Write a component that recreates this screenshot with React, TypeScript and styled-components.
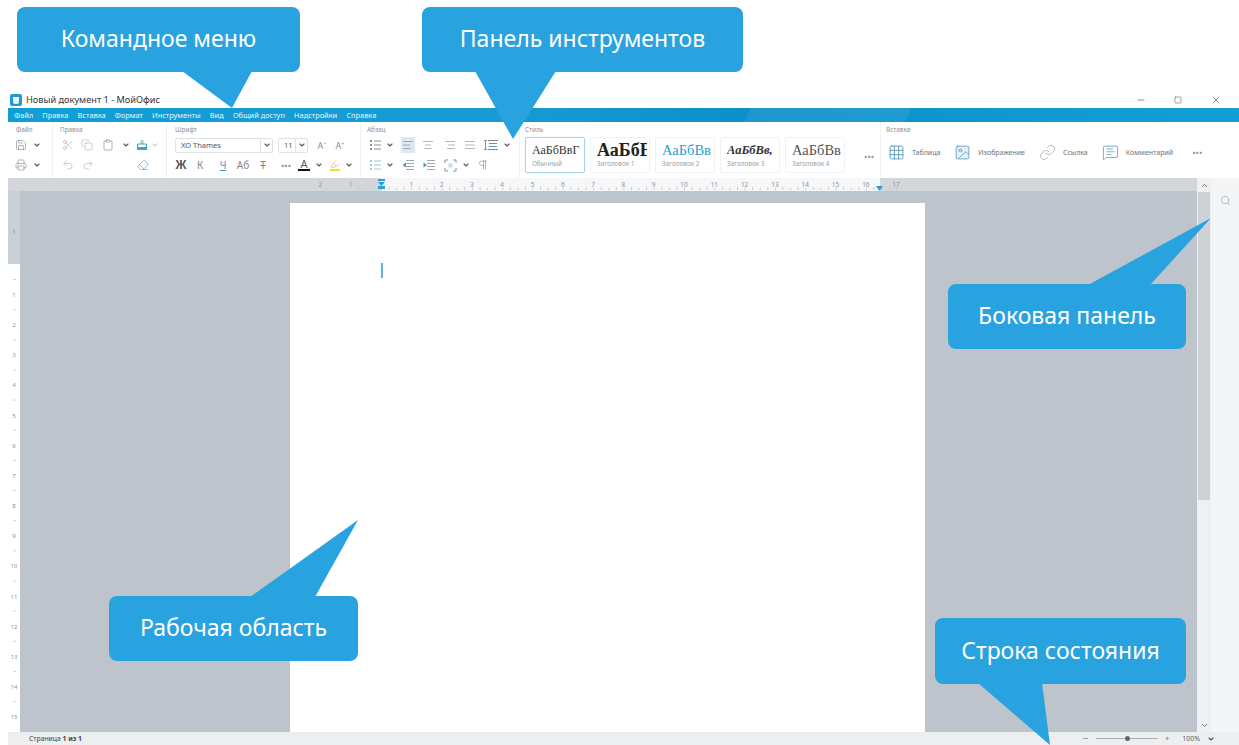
import React from 'react';
import styled, { createGlobalStyle } from 'styled-components';
import {
  Save, Printer, Scissors, Copy, Clipboard, Undo2, Redo2, Eraser, ChevronDown, ChevronUp,
  AlignLeft, AlignCenter, AlignRight, AlignJustify, Pilcrow,
  Highlighter, Minus, Square, X, Search, Link, MessageSquareText, Image as ImageIcon, Grid3x3,
} from 'lucide-react';

const Global = createGlobalStyle`
  html, body { margin: 0; padding: 0; background: #fff; }
  body { font-family: "Noto Sans", "Liberation Sans", sans-serif; overflow: hidden; }
`;

const Page = styled.div`
  position: relative;
  width: 1239px;
  height: 745px;
  overflow: hidden;
  padding: 91px 0 0 8px;
  box-sizing: border-box;
  display: flex;
  flex-direction: column;
`;

/* Window chrome */
const TitleBar = styled.div`
  height: 17px;
  display: flex;
  align-items: center;
  padding-left: 2px;
  gap: 4px;
  font-size: 9.2px;
  color: #333;
`;
const TitleText = styled.span`
  flex: 1;
`;
const WinButtons = styled.div`
  display: flex;
  align-items: center;
  color: #555;
  padding-right: 17px;
  gap: 28px;
`;
const MenuBar = styled.div`
  height: 14px;
  background:
    linear-gradient(115deg, transparent 60%, rgba(255,255,255,.07) 60%, rgba(255,255,255,.07) 73%, transparent 73%),
    linear-gradient(100deg, #0f9fd6 0%, #1a9ad2 40%, #0d8fc9 60%, #12a0d4 100%);
  display: flex;
  align-items: center;
  padding-left: 6px;
  gap: 9.2px;
  font-size: 7.4px;
  color: #e6f6fc;
`;

/* Ribbon */
const Ribbon = styled.div`
  height: 56px;
  display: flex;
  background: #fff;
`;
const Group = styled.div<{ $w: number; $pl: number; $last?: boolean }>`
  width: ${(p) => p.$w}px;
  padding-left: ${(p) => p.$pl}px;
  box-sizing: border-box;
  flex: none;
  display: flex;
  flex-direction: column;
  border-right: ${(p) => (p.$last ? 'none' : '1px solid #eff1f3')};
`;
const GroupLabel = styled.div<{ $ml?: number }>`
  height: 13px;
  font-size: 6.4px;
  line-height: 15px;
  color: #8a9097;
  margin-left: ${(p) => p.$ml ?? 0}px;
`;
const ToolRow = styled.div`
  height: 20px;
  display: flex;
  align-items: center;
`;
const Slot = styled.div<{ $w: number; $m?: number; $on?: boolean; $c?: string }>`
  width: ${(p) => p.$w}px;
  margin-left: ${(p) => p.$m ?? 0}px;
  height: 16px;
  flex: none;
  display: flex;
  align-items: center;
  justify-content: center;
  background: ${(p) => (p.$on ? '#dfe8ef' : 'transparent')};
  color: ${(p) => p.$c ?? '#7f868d'};
  font-size: 11px;
`;
const FieldBox = styled.div<{ $w: number; $m?: number }>`
  width: ${(p) => p.$w}px;
  margin-left: ${(p) => p.$m ?? 0}px;
  height: 15px;
  flex: none;
  box-sizing: border-box;
  border: 1px solid #dfe2e5;
  border-radius: 2px;
  display: flex;
  align-items: center;
  justify-content: space-between;
  padding-left: 5px;
  font-size: 7.5px;
  color: #555;
`;
const FieldArrow = styled.span`
  width: 11px;
  height: 13px;
  border-left: 1px solid #dfe2e5;
  display: flex;
  align-items: center;
  justify-content: center;
  color: #666;
`;
const Bold = styled.b`
  font-family: "Liberation Sans", sans-serif;
  font-size: 12px;
  color: #555;
`;
const Plain = styled.span<{ $deco?: string }>`
  font-size: 10px;
  color: inherit;
  text-decoration: ${(p) => p.$deco ?? 'none'};
`;
const Sup = styled.span`
  font-size: 9px;
  color: #8a9097;
`;
const Dots = styled.span`
  font-size: 9px;
  color: #8a9097;
  line-height: 1;
`;
const ColorA = styled.span<{ $bar: string }>`
  font-size: 11px;
  line-height: 10px;
  color: #555;
  border-bottom: 2px solid ${(p) => p.$bar};
  padding: 0 2px;
`;
const PenMark = styled.span`
  display: flex;
  color: #c9a63c;
  border-bottom: 2px solid #f5dc2e;
`;

const Gallery = styled.div`
  display: flex;
  align-items: flex-start;
  gap: 5px;
  margin-top: 2px;
`;
const StyleCard = styled.div<{ $on?: boolean }>`
  width: 60px;
  height: 36px;
  box-sizing: border-box;
  flex: none;
  border: 1px solid ${(p) => (p.$on ? '#a6d3ea' : '#f0f1f3')};
  border-radius: 2px;
  padding: 0 0 0 6px;
  overflow: hidden;
  display: flex;
  flex-direction: column;
  justify-content: center;
  ${(p) => (p.$on ? 'box-shadow: 0 0 1px #a6d3ea;' : '')}
`;
const Sample = styled.div<{ $size: number; $c: string; $b?: boolean; $i?: boolean }>`
  font-family: "Liberation Serif", serif;
  font-size: ${(p) => p.$size}px;
  line-height: 18px;
  height: 17px;
  color: ${(p) => p.$c};
  font-weight: ${(p) => (p.$b ? 700 : 400)};
  font-style: ${(p) => (p.$i ? 'italic' : 'normal')};
  white-space: nowrap;
  overflow: hidden;
  width: 50px;
`;
const SampleName = styled.div`
  font-size: 6.4px;
  line-height: 11px;
  color: #9aa0a6;
  white-space: nowrap;
`;
const GalleryMore = styled.div`
  margin: 13px 0 0 14px;
  color: #8a9097;
  font-size: 9px;
`;
const InsertRow = styled.div`
  display: flex;
  align-items: center;
  height: 30px;
  margin-top: 2px;
`;
const InsertItem = styled.div<{ $m: number }>`
  display: flex;
  align-items: center;
  gap: 7px;
  margin-left: ${(p) => p.$m}px;
  font-size: 7px;
  color: #6d7379;
  white-space: nowrap;
`;
const InsertIcon = styled.span<{ $c?: string }>`
  display: flex;
  color: ${(p) => p.$c ?? '#4588ad'};
`;

/* Work area */
const RulerBar = styled.div`
  height: 13px;
  display: flex;
  margin-right: 42px;
  background: #d3d7db;
`;
const Main = styled.div`
  flex: 1;
  min-height: 0;
  display: flex;
`;
const VRuler = styled.div`
  width: 12px;
  flex: none;
  background: #fff;
`;
const Workspace = styled.div`
  flex: 1;
  background: #bec4cb;
  padding: 12px 0 0 270px;
  overflow: hidden;
`;
const Sheet = styled.div`
  width: 635px;
  height: 560px;
  background: #fff;
  padding: 60px 0 0 91px;
  box-sizing: border-box;
`;
const Caret = styled.div`
  width: 2px;
  height: 15px;
  background: #5db6e2;
`;
const Scrollbar = styled.div`
  width: 14px;
  flex: none;
  background: #eef0f2;
  display: flex;
  flex-direction: column;
  align-items: center;
  color: #5d6369;
`;
const ScrollThumb = styled.div`
  width: 12px;
  height: 308px;
  background: #ced2d7;
  margin-bottom: auto;
`;
const ScrollEnd = styled.div`
  height: 14px;
  display: flex;
  align-items: center;
`;
const SidePanel = styled.div`
  flex: 1;
  background: #f4f5f6;
  display: flex;
  justify-content: center;
  padding-top: 17px;
  color: #8a9097;
`;
const RightColumn = styled.div`
  display: flex;
  margin-top: -13px;
  flex: none;
  width: 42px;
`;
const StatusBar = styled.div`
  height: 13px;
  background: #eceef0;
  display: flex;
  align-items: center;
  font-size: 6.8px;
  color: #444;
  padding: 0 24px 0 21px;
`;
const StatusText = styled.span`
  flex: 1;
`;
const Zoomer = styled.div`
  display: flex;
  align-items: center;
  gap: 7px;
  color: #666;
`;
const ZoomTrack = styled.div`
  position: relative;
  width: 62px;
  height: 1px;
  background: #aab0b5;
`;
const ZoomKnob = styled.div`
  position: absolute;
  left: 29px;
  top: -2px;
  width: 5px;
  height: 5px;
  border-radius: 50%;
  background: #666;
`;
const ZoomValue = styled.span`
  margin-left: 6px;
  font-size: 7px;
`;

/* Callouts over the window */
const Tail = styled.svg`
  position: absolute;
  left: 0;
  top: 0;
  width: 1239px;
  height: 745px;
  pointer-events: none;
`;
const Callout = styled.div<{ $x: number; $y: number; $w: number; $h: number }>`
  position: absolute;
  left: ${(p) => p.$x}px;
  top: ${(p) => p.$y}px;
  width: ${(p) => p.$w}px;
  height: ${(p) => p.$h}px;
  padding-bottom: 3px;
  box-sizing: border-box;
  background: #29a3e0;
  border-radius: 8px;
  color: #fff;
  font-size: 23px;
  display: flex;
  align-items: center;
  justify-content: center;
  white-space: nowrap;
`;

const Chev = () => <ChevronDown size={8} strokeWidth={3.4} color="#555" />;
const I = { size: 12, strokeWidth: 1.2 };

// Stamp shaped "copy formatting" tool
const StampIcon = () => (
  <svg width="12" height="13" viewBox="0 0 12 13">
    <path d="M4.500 1h3v4h-3z" fill="#a9c9dc" />
    <rect x="1.500" y="5" width="9" height="5.500" rx="1" fill="none" stroke="#4a9dc8" strokeWidth="1.200" />
    <rect x="1" y="8" width="10" height="3" fill="#4a9dc8" />
  </svg>
);

// Bulleted list: three dots with a line each
const BulletsIcon = ({ c }: { c: string }) => (
  <svg width="13" height="12" viewBox="0 0 13 12">
    {[2, 6, 10].map((y) => (
      <g key={y}>
        <rect x="1" y={y - 1} width="2" height="2" fill={c} />
        <rect x="5" y={y - 0.5} width="7" height="1" fill={c} />
      </g>
    ))}
  </svg>
);

// Indent arrows next to a paragraph block
const IndentIcon = ({ flip }: { flip?: boolean }) => (
  <svg width="13" height="12" viewBox="0 0 13 12">
    {[1, 4, 7, 10].map((y) => (
      <rect key={y} x="4" y={y} width="8" height="1" fill="#a3a8ad" />
    ))}
    <path d={flip ? 'M0.500 3.500 4 6 0.500 8.500z' : 'M4 3.500 0.500 6 4 8.500z'} fill="#3f9cc9" />
  </svg>
);

// Line spacing: framed lines with a bracket at the left
const SpacingIcon = () => (
  <svg width="15" height="12" viewBox="0 0 15 12">
    <rect x="0" y="1" width="3" height="1" fill="#8a9097" />
    <rect x="1" y="1" width="1" height="10" fill="#8a9097" />
    <rect x="0" y="10" width="3" height="1" fill="#8a9097" />
    <rect x="4" y="1" width="10" height="1" fill="#7f868d" />
    <rect x="4" y="10" width="10" height="1" fill="#7f868d" />
    <rect x="5" y="4" width="8" height="1" fill="#3f9cc9" />
    <rect x="5" y="7" width="8" height="1" fill="#3f9cc9" />
  </svg>
);

// Four corners round a dotted centre
const ColumnsIcon = () => (
  <svg width="13" height="13" viewBox="0 0 13 13" fill="none" stroke="#8a9097" strokeWidth="1">
    <path d="M1 4V1h3M9 1h3v3M12 9v3H9M4 12H1V9" />
    <rect x="4.500" y="4.500" width="4" height="4" fill="#bfe0ef" stroke="none" />
  </svg>
);

const HRuler = () => {
  const unit = 30.3;
  const zero = 373; // x of ruler zero within this svg
  const nums = [-2, -1, 1, 2, 3, 4, 5, 6, 7, 8, 9, 10, 11, 12, 13, 14, 15, 16, 17];
  const ticks: number[] = [];
  for (let i = -3; i <= 68; i++) ticks.push(zero + (i * unit) / 4);
  return (
    <svg width="1189" height="13">
      <rect x={zero} y="0" width="499" height="13" fill="#f6f7f8" />
      {ticks.map((t, i) => (
        <rect key={i} x={t} y={i % 2 ? 10 : 9} width="1" height={i % 2 ? 2 : 3} fill="#c6cacf" />
      ))}
      {nums.map((n) => (
        <text key={n} x={zero + n * unit} y="9" fontSize="6.4" fontFamily="Noto Sans" fill="#8e9399" textAnchor="middle">
          {Math.abs(n)}
        </text>
      ))}
      <rect x={zero - 3} y="1" width="7" height="2" fill="#2a9fd8" />
      <path d={`M${zero - 3} 4h7l-3.500 4z M${zero - 3} 8h7v3h-7z`} fill="#2a9fd8" />
      <path d={`M${zero + 495} 8h7l-3.500 5z`} fill="#2a9fd8" />
    </svg>
  );
};

const VRulerMarks = () => {
  const rows = Array.from({ length: 15 }, (_, i) => i + 1);
  return (
    <svg width="12" height="541">
      <rect x="0" y="0" width="12" height="73" fill="#c9d0d6" />
      <text x="6" y="43" fontSize="6" fontFamily="Noto Sans" fill="#7c8288" textAnchor="middle">1</text>
      {rows.map((n) => (
        <g key={n}>
          <text x="6" y={73 + (n - 1) * 30.15 + 33} fontSize="6" fontFamily="Noto Sans" fill="#8e9399" textAnchor="middle">{n}</text>
          <rect x="5" y={73 + (n - 1) * 30.15 + 15} width="3" height="1" fill="#d5d8db" />
        </g>
      ))}
    </svg>
  );
};

export default function App() {
  return (
    <Page>
      <Global />
      <TitleBar>
        <svg width="12" height="12" viewBox="0 0 12 12">
          <rect width="12" height="12" rx="2" fill="#1f9ad6" />
          <path d="M3 3h6v4.500a2.500 2.500 0 0 1-2.500 2.500h-1A2.500 2.500 0 0 1 3 7.500z" fill="#e9f6fc" />
        </svg>
        <TitleText>Новый документ 1 - МойОфис</TitleText>
        <WinButtons>
          <Minus size={10} strokeWidth={1.6} />
          <Square size={8} strokeWidth={1.6} />
          <X size={12} strokeWidth={1.4} />
        </WinButtons>
      </TitleBar>
      <MenuBar>
        {['Файл', 'Правка', 'Вставка', 'Формат', 'Инструменты', 'Вид', 'Общий доступ', 'Надстройки', 'Справка'].map((m) => (
          <span key={m}>{m}</span>
        ))}
      </MenuBar>
      <Ribbon>
        <Group $w={45} $pl={5}>
          <GroupLabel $ml={3}>Файл</GroupLabel>
          <ToolRow>
            <Slot $w={16}><Save {...I} /></Slot>
            <Slot $w={16}><Chev /></Slot>
          </ToolRow>
          <ToolRow>
            <Slot $w={16}><Printer {...I} /></Slot>
            <Slot $w={16}><Chev /></Slot>
          </ToolRow>
        </Group>
        <Group $w={114} $pl={7}>
          <GroupLabel>Правка</GroupLabel>
          <ToolRow>
            <Slot $w={16} $c="#a9aeb3"><Scissors {...I} /></Slot>
            <Slot $w={22} $c="#a9aeb3"><Copy {...I} /></Slot>
            <Slot $w={20} $c="#6f8797"><Clipboard {...I} /></Slot>
            <Slot $w={15}><Chev /></Slot>
            <Slot $w={18}><StampIcon /></Slot>
            <Slot $w={8}><ChevronDown size={8} strokeWidth={3} color="#b5b9bd" /></Slot>
          </ToolRow>
          <ToolRow>
            <Slot $w={16} $c="#a9aeb3"><Undo2 {...I} /></Slot>
            <Slot $w={24} $c="#a9aeb3"><Redo2 {...I} /></Slot>
            <Slot $w={18} $m={34} $c="#4a9dc8"><Eraser {...I} /></Slot>
          </ToolRow>
        </Group>
        <Group $w={194} $pl={5}>
          <GroupLabel $ml={3}>Шрифт</GroupLabel>
          <ToolRow>
            <FieldBox $w={98} $m={3}>XO Thames<FieldArrow><Chev /></FieldArrow></FieldBox>
            <FieldBox $w={30} $m={5}>11<FieldArrow><Chev /></FieldArrow></FieldBox>
            <Slot $w={14} $m={7}><Sup>A⁻</Sup></Slot>
            <Slot $w={14} $m={4}><Sup>A⁺</Sup></Slot>
          </ToolRow>
          <ToolRow>
            <Slot $w={18}><Bold>Ж</Bold></Slot>
            <Slot $w={20}><Plain>К</Plain></Slot>
            <Slot $w={26} $c="#3f9cc9"><Plain $deco="underline">Ч</Plain></Slot>
            <Slot $w={14}><Plain>Аб</Plain></Slot>
            <Slot $w={26}><Plain $deco="line-through">Т</Plain></Slot>
            <Slot $w={20}><Dots>•••</Dots></Slot>
            <Slot $w={16}><ColorA $bar="#111">A</ColorA></Slot>
            <Slot $w={14}><Chev /></Slot>
            <Slot $w={18}><PenMark><Highlighter size={10} strokeWidth={1.3} /></PenMark></Slot>
            <Slot $w={10}><Chev /></Slot>
          </ToolRow>
        </Group>
        <Group $w={159} $pl={6}>
          <GroupLabel>Абзац</GroupLabel>
          <ToolRow>
            <Slot $w={16}><BulletsIcon c="#8a9097" /></Slot>
            <Slot $w={14}><Chev /></Slot>
            <Slot $w={14} $m={4} $on $c="#5e7f98"><AlignLeft {...I} /></Slot>
            <Slot $w={14} $m={6}><AlignCenter {...I} /></Slot>
            <Slot $w={14} $m={8}><AlignRight {...I} /></Slot>
            <Slot $w={14} $m={6}><AlignJustify {...I} /></Slot>
            <Slot $w={16} $m={6}><SpacingIcon /></Slot>
            <Slot $w={10} $m={3}><Chev /></Slot>
          </ToolRow>
          <ToolRow>
            <Slot $w={16}><BulletsIcon c="#9ccbe2" /></Slot>
            <Slot $w={14}><Chev /></Slot>
            <Slot $w={14} $m={4}><IndentIcon /></Slot>
            <Slot $w={14} $m={7}><IndentIcon flip /></Slot>
            <Slot $w={14} $m={7}><ColumnsIcon /></Slot>
            <Slot $w={10} $m={4}><Chev /></Slot>
            <Slot $w={14} $m={5}><Pilcrow {...I} /></Slot>
          </ToolRow>
        </Group>
        <Group $w={361} $pl={5}>
          <GroupLabel>Стиль</GroupLabel>
          <Gallery>
            <StyleCard $on><Sample $size={12} $c="#333">АаБбВвГ</Sample><SampleName>Обычный</SampleName></StyleCard>
            <StyleCard><Sample $size={18} $c="#222" $b>АаБбВ</Sample><SampleName>Заголовок 1</SampleName></StyleCard>
            <StyleCard><Sample $size={14.5} $c="#2a9fd8">АаБбВв</Sample><SampleName>Заголовок 2</SampleName></StyleCard>
            <StyleCard><Sample $size={12.5} $c="#333" $b $i>АаБбВв,</Sample><SampleName>Заголовок 3</SampleName></StyleCard>
            <StyleCard><Sample $size={14.5} $c="#555">АаБбВв</Sample><SampleName>Заголовок 4</SampleName></StyleCard>
            <GalleryMore>•••</GalleryMore>
          </Gallery>
        </Group>
        <Group $w={350} $pl={5} $last>
          <GroupLabel>Вставка</GroupLabel>
          <InsertRow>
            <InsertItem $m={2}><InsertIcon><Grid3x3 size={17} strokeWidth={1.1} /></InsertIcon>Таблица</InsertItem>
            <InsertItem $m={14}><InsertIcon><ImageIcon size={17} strokeWidth={1} fill="#e3f0f7" /></InsertIcon>Изображение</InsertItem>
            <InsertItem $m={14}><InsertIcon $c="#9aa0a6"><Link size={17} strokeWidth={1} /></InsertIcon>Ссылка</InsertItem>
            <InsertItem $m={14}><InsertIcon><MessageSquareText size={17} strokeWidth={1} /></InsertIcon>Комментарий</InsertItem>
            <InsertItem $m={19}><Dots>•••</Dots></InsertItem>
          </InsertRow>
        </Group>
      </Ribbon>
      <RulerBar><HRuler /></RulerBar>
      <Main>
        <VRuler><VRulerMarks /></VRuler>
        <Workspace>
          <Sheet><Caret /></Sheet>
        </Workspace>
        <RightColumn>
          <Scrollbar>
            <ScrollEnd><ChevronUp size={9} strokeWidth={2.4} /></ScrollEnd>
            <ScrollThumb />
            <ScrollEnd><ChevronDown size={9} strokeWidth={2.4} /></ScrollEnd>
          </Scrollbar>
          <SidePanel><Search size={11} strokeWidth={1.2} /></SidePanel>
        </RightColumn>
      </Main>
      <StatusBar>
        <StatusText>Страница <b>1 из 1</b></StatusText>
        <Zoomer>
          <Minus size={7} />
          <ZoomTrack><ZoomKnob /></ZoomTrack>
          <span>+</span>
          <ZoomValue>100%</ZoomValue>
          <Chev />
        </Zoomer>
      </StatusBar>

      <Tail viewBox="0 0 1239 745">
        <path d="M182 71H252L232 108Z" fill="#29a3e0" />
        <path d="M475 71H556L513 139Z" fill="#29a3e0" />
        <path d="M1088 285H1150L1211 218Z" fill="#29a3e0" />
        <path d="M250 597H315L358 520Z" fill="#29a3e0" />
        <path d="M978 683H1042L1050 745Z" fill="#29a3e0" />
      </Tail>
      <Callout $x={17} $y={7} $w={283} $h={65}>Командное меню</Callout>
      <Callout $x={422} $y={7} $w={321} $h={65}>Панель инструментов</Callout>
      <Callout $x={948} $y={284} $w={238} $h={65}>Боковая панель</Callout>
      <Callout $x={109} $y={596} $w={249} $h={65}>Рабочая область</Callout>
      <Callout $x={935} $y={618} $w={251} $h={66}>Строка состояния</Callout>
    </Page>
  );
}
